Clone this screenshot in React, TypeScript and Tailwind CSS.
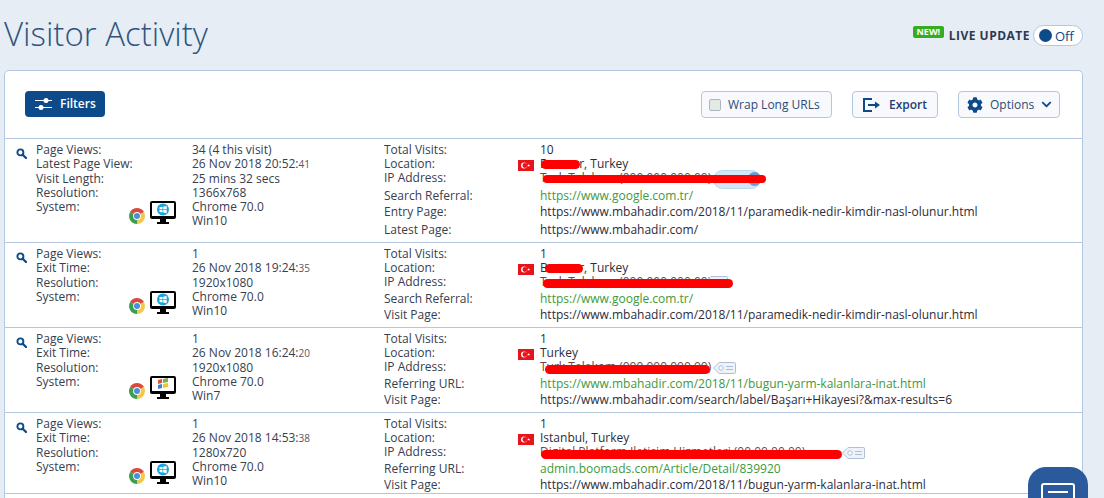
import React from "react";
import { FaChevronDown, FaCog } from "react-icons/fa";

const Seconds = ({ s }: { s: string }) => <span className="text-[10px] text-[#556]">{s}</span>;

const Flag = () => (
  <svg width="16" height="11" viewBox="0 0 16 11" className="absolute top-[3px] left-[-22px]">
    <rect width="16" height="11" fill="#e8141c" />
    <circle cx="6" cy="5.5" r="3" fill="#fff" />
    <circle cx="6.9" cy="5.5" r="2.4" fill="#e8141c" />
    <path d="M10.6 3.9l.4 1.1 1.2 0-1 .7.4 1.1-1-.7-1 .7.4-1.1-1-.7 1.2 0z" fill="#fff" />
  </svg>
);

const Tag = () => (
  <svg width="23" height="12" viewBox="0 0 23 12" className="block">
    <path d="M6 .5h15.500a1 1 0 0 1 1 1v9a1 1 0 0 1-1 1H6L.5 6z" fill="#eef3f9" stroke="#aebfd6" />
    <circle cx="8" cy="6" r="2.200" fill="#fff" stroke="#aebfd6" />
    <path d="M13 4.500h7M13 7.500h7" stroke="#aebfd6" />
  </svg>
);

const SearchIcon = () => (
  <svg width="11" height="11" viewBox="0 0 11 11" className="mt-[5px] mr-[9px] ml-[11px] shrink-0">
    <circle cx="4.4" cy="4.4" r="3" fill="none" stroke="#0c4a8a" strokeWidth="1.9" />
    <path d="M6.7 6.7L10 10" stroke="#0c4a8a" strokeWidth="2.3" strokeLinecap="round" />
  </svg>
);

const Chrome = () => (
  <svg width="16" height="16" viewBox="0 0 16 16" className="shrink-0">
    <path d="M8 8L1.1 4A8 8 0 0 1 14.900 4z" fill="#d9493c" />
    <path d="M8 8l6.900-4A8 8 0 0 1 8 16z" fill="#f2c84b" />
    <path d="M8 8v8A8 8 0 0 1 1.100 4z" fill="#3f9e4d" />
    <circle cx="8" cy="8" r="3.900" fill="#fff" />
    <circle cx="8" cy="8" r="3" fill="#4a8fd8" />
  </svg>
);

const Monitor = ({ legacy }: { legacy?: boolean }) => (
  <svg width="26" height="23" viewBox="0 0 26 23" className="shrink-0">
    <rect width="26" height="18" rx="2" fill="#000" />
    <rect x="2" y="2" width="22" height="13" fill="#fff" />
    <rect x="10" y="18" width="6" height="3" fill="#000" />
    <rect x="7" y="21" width="12" height="2" fill="#000" />
    {legacy ? (
      <g>
        <path d="M8 4l4-1v4l-4 1z" fill="#e2552e" />
        <path d="M13 3l5-1v4l-5 1z" fill="#7cb342" />
        <path d="M8 9l4-1v4l-4 1z" fill="#2f86d6" />
        <path d="M13 8l5-1v4l-5 1z" fill="#f4c430" />
      </g>
    ) : (
      <g>
        <circle cx="13" cy="8.500" r="6" fill="#18a5dc" />
        <path d="M9.500 6.300l3-.5v2.500h-3zM13.200 5.700l3.500-.6v3.200h-3.500zM9.500 9h3v2.500l-3-.5zM13.200 9h3.500v3.200l-3.500-.6z" fill="#fff" />
      </g>
    )}
  </svg>
);

const RedBar = ({ className }: { className: string }) => (
  <span className={`absolute rounded-full bg-[#fd0000] ${className}`} />
);

const Line = ({ h, children }: { h: string; children?: React.ReactNode }) => (
  <div className={`relative whitespace-nowrap ${h}`}>{children}</div>
);

type Row = {
  h: string;
  left: [string, React.ReactNode][];
  legacy?: boolean;
  right: [string, string, React.ReactNode][];
};

const link = "text-[#3d9a3d]";
const isp = "text-[#6b4a3f]";

const rows: Row[] = [
  {
    h: "h-[104px]",
    left: [
      ["Page Views:", "34 (4 this visit)"],
      ["Latest Page View:", <>26 Nov 2018 20:52:<Seconds s="41" /></>],
      ["Visit Length:", "25 mins 32 secs"],
      ["Resolution:", "1366x768"],
      ["System:", "Chrome 70.0"],
    ],
    right: [
      ["h-[14px]", "Total Visits:", "10"],
      [
        "h-[14px]",
        "Location:",
        <>
          <Flag />
          Bxxxxxr, Turkey
          <RedBar className="top-[3px] left-[1px] h-[9px] w-[39px]" />
        </>,
      ],
      [
        "h-[18px]",
        "IP Address:",
        <>
          <span className={isp}>Turk Telekom (000.000.000.00)</span>
          <span className="absolute top-[-1px] left-[173px] h-[19px] w-[48px] rounded-full border border-[#b9d8ee] bg-[#d3e7f5]" />
          <span className="absolute top-[1px] left-[208px] h-[14px] w-[13px] rounded-full bg-[#6b9acb]" />
          <RedBar className="top-[4px] left-[3px] h-[8px] w-[223px]" />
        </>,
      ],
      ["h-[16px]", "Search Referral:", <span className={link}>https://www.google.com.tr/</span>],
      ["h-[18px]", "Entry Page:", "https://www.mbahadir.com/2018/11/paramedik-nedir-kimdir-nasl-olunur.html"],
      ["h-[16px]", "Latest Page:", "https://www.mbahadir.com/"],
    ],
  },
  {
    h: "h-[85px]",
    left: [
      ["Page Views:", "1"],
      ["Exit Time:", <>26 Nov 2018 19:24:<Seconds s="35" /></>],
      ["Resolution:", "1920x1080"],
      ["System:", "Chrome 70.0"],
    ],
    right: [
      ["h-[14px]", "Total Visits:", "1"],
      [
        "h-[14px]",
        "Location:",
        <>
          <Flag />
          Bxxxxxr, Turkey
          <RedBar className="top-[3px] left-[5px] h-[9px] w-[38px]" />
        </>,
      ],
      [
        "h-[17px]",
        "IP Address:",
        <>
          <span className={isp}>Turk Telekom (000.000.000.00)</span>
          <span className="absolute top-[1px] left-[165px]"><Tag /></span>
          <RedBar className="top-[4px] left-[3px] h-[9px] w-[190px]" />
        </>,
      ],
      ["h-[16px]", "Search Referral:", <span className={link}>https://www.google.com.tr/</span>],
      ["h-[17px]", "Visit Page:", "https://www.mbahadir.com/2018/11/paramedik-nedir-kimdir-nasl-olunur.html"],
    ],
  },
  {
    h: "h-[85px]",
    legacy: true,
    left: [
      ["Page Views:", "1"],
      ["Exit Time:", <>26 Nov 2018 16:24:<Seconds s="20" /></>],
      ["Resolution:", "1920x1080"],
      ["System:", "Chrome 70.0"],
    ],
    right: [
      ["h-[14px]", "Total Visits:", "1"],
      ["h-[14px]", "Location:", <><Flag />Turkey</>],
      [
        "h-[17px]",
        "IP Address:",
        <>
          <span className={isp}>Turk Telekom (000.000.000.00)</span>
          <RedBar className="top-[5px] left-[5px] h-[9px] w-[165px]" />
          <span className="absolute top-[2px] left-[173px]"><Tag /></span>
        </>,
      ],
      ["h-[16px]", "Referring URL:", <span className={link}>https://www.mbahadir.com/2018/11/bugun-yarm-kalanlara-inat.html</span>],
      ["h-[17px]", "Visit Page:", "https://www.mbahadir.com/search/label/Başarı+Hikayesi?&max-results=6"],
    ],
  },
  {
    h: "h-[81px]",
    left: [
      ["Page Views:", "1"],
      ["Exit Time:", <>26 Nov 2018 14:53:<Seconds s="38" /></>],
      ["Resolution:", "1280x720"],
      ["System:", "Chrome 70.0"],
    ],
    right: [
      ["h-[14px]", "Total Visits:", "1"],
      ["h-[14px]", "Location:", <><Flag />Istanbul, Turkey</>],
      [
        "h-[17px]",
        "IP Address:",
        <>
          <span className={isp}>Digital Platform Iletisim Hizmetleri (00.00.00.00)</span>
          <RedBar className="top-[5px] left-[1px] h-[9px] w-[301px]" />
          <span className="absolute top-[2px] left-[302px]"><Tag /></span>
        </>,
      ],
      ["h-[16px]", "Referring URL:", <span className={link}>admin.boomads.com/Article/Detail/839920</span>],
      ["h-[17px]", "Visit Page:", "https://www.mbahadir.com/2018/11/bugun-yarm-kalanlara-inat.html"],
    ],
  },
];

const VisitRow = ({ row }: { row: Row }) => (
  <div className={`flex border-b border-[#b4c7e0] pt-[4px] ${row.h}`}>
    <SearchIcon />
    <div className="w-[156px] shrink-0">
      {row.left.map(([label]) => (
        <Line key={label} h="h-[14.3px]">
          {label}
          {label === "System:" && (
            <div className="absolute top-[1px] left-[93px] flex items-end gap-[5px]">
              <Chrome />
              <Monitor legacy={row.legacy} />
            </div>
          )}
        </Line>
      ))}
    </div>
    <div className="w-[192px] shrink-0">
      {row.left.map(([label, value]) => (
        <Line key={label} h="h-[14.3px]">{value}</Line>
      ))}
      <Line h="h-[14.3px]">{row.legacy ? "Win7" : "Win10"}</Line>
    </div>
    <div className="w-[156px] shrink-0">
      {row.right.map(([h, label]) => (
        <Line key={label} h={h}>{label}</Line>
      ))}
    </div>
    <div className="min-w-0 flex-1 text-[#2c2c3c]">
      {row.right.map(([h, label, value]) => (
        <Line key={label} h={h}>{value}</Line>
      ))}
    </div>
  </div>
);

export default function App() {
  return (
    <div className="relative h-[498px] w-[1104px] overflow-hidden bg-[#e6edf5] font-['Open_Sans',sans-serif] text-[12px] leading-[14px] text-[#37404f]">
      <div className="flex h-[70px] items-start justify-between pr-[21px] pl-[4px]">
        <h1 className="mt-[11px] text-[33px] leading-[46px] font-light text-[#2f5480]">Visitor Activity</h1>
        <div className="mt-[25px] flex items-center">
          <span className="mt-[-7px] mr-[5px] rounded-[2px] bg-[#35ad1f] px-[3.5px] text-[9px] leading-[12px] font-bold text-white">NEW!</span>
          <span className="mr-[3px] text-[12px] font-bold tracking-[0.5px] text-[#2e3a50]">LIVE UPDATE</span>
          <div className="flex h-[21px] w-[50px] items-center rounded-full border border-[#b4c7e0] bg-white pl-[5px] text-[#0c4a8a]">
            <span className="mr-[3px] h-[13px] w-[13px] rounded-full bg-[#0c4a8a]" />
            <span className="text-[13px]">Off</span>
          </div>
        </div>
      </div>

      <div className="ml-[4px] h-[428px] w-[1079px] rounded-t-[5px] border border-b-0 border-[#b4c7e0] bg-white">
        <div className="flex h-[68px] items-center justify-between border-b border-[#b4c7e0] pr-[22px] pl-[20px]">
          <button className="mb-[1px] flex h-[26px] w-[80px] items-center rounded-[4px] bg-[#0c4a8a] pl-[10px] font-semibold text-white">
            <svg width="17" height="14" viewBox="0 0 17 14" className="mr-[8px]">
              <path d="M0 3.5h17M0 10.500h17" stroke="#fff" strokeWidth="1" />
              <circle cx="11" cy="3.5" r="2.5" fill="#fff" />
              <circle cx="6" cy="10.5" r="2.5" fill="#fff" />
            </svg>
            Filters
          </button>
          <div className="flex items-center">
            <label className="mr-[20px] flex h-[27px] w-[131px] items-center rounded-[4px] border border-[#b4c7e0] bg-[#f7f9fc] pl-[7px] text-[#2f4a75]">
              <span className="mr-[7px] h-[12px] w-[12px] rounded-[2px] border border-[#aab7c4] bg-[#e4e9e4]" />
              Wrap Long URLs
            </label>
            <button className="mr-[20px] flex h-[27px] w-[86px] items-center rounded-[4px] border border-[#b4c7e0] bg-[#f7f9fc] pl-[10px] font-semibold text-[#1f3f70]">
              <svg width="17" height="14" viewBox="0 0 17 14" className="mr-[9px]">
                <path d="M9 1H1v12h8" fill="none" stroke="#0c4a8a" strokeWidth="2" />
                <path d="M5 7h8" stroke="#0c4a8a" strokeWidth="2" />
                <path d="M12 3.5L17 7l-5 3.500z" fill="#0c4a8a" />
              </svg>
              Export
            </button>
            <button className="flex h-[27px] w-[102px] items-center rounded-[4px] border border-[#b4c7e0] bg-[#f7f9fc] pl-[8px] text-[#2f4a75]">
              <FaCog size={16} className="mr-[7px] text-[#0c4a8a]" />
              Options
              <FaChevronDown size={11} className="ml-[7px] text-[#0c4a8a]" />
            </button>
          </div>
        </div>
        {rows.map((row, i) => (
          <VisitRow key={i} row={row} />
        ))}
      </div>

      <div className="absolute top-[467px] left-[1028px] h-[60px] w-[60px] rounded-[18px] bg-[#2a5a9c]">
        <div className="mx-auto mt-[16px] h-[30px] w-[34px] rounded-[3px] border-[2px] border-white">
          <div className="mx-auto mt-[6px] h-[2px] w-[20px] bg-white" />
        </div>
      </div>
    </div>
  );
}
